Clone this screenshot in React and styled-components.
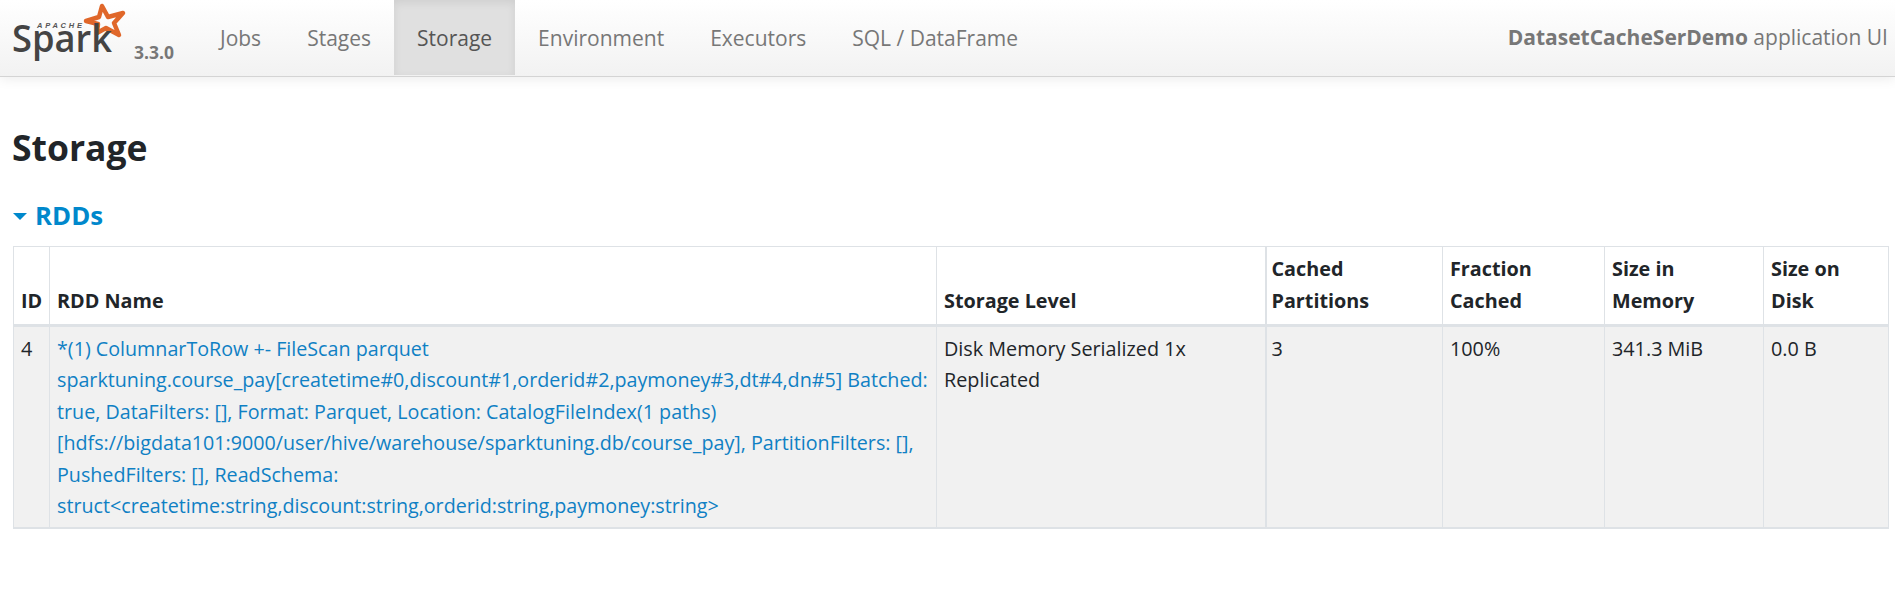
import React from "react";
import styled, { createGlobalStyle } from "styled-components";

const Global = createGlobalStyle`
  html, body { margin: 0; padding: 0; background: #fff; }
  body {
    font-family: "Open Sans", "Noto Sans", "Liberation Sans", sans-serif;
    font-size: 19.8px;
    line-height: 31.5px;
    color: #212529;
  }
`;

const Navbar = styled.nav`
  display: flex;
  align-items: stretch;
  box-sizing: border-box;
  height: 76.5px;
  border-bottom: 1.5px solid #d4d4d4;
  background: linear-gradient(to bottom, #ffffff, #f2f2f2);
  box-shadow: 0 2px 12px rgba(0, 0, 0, 0.08);
`;

const Brand = styled.a`
  display: flex;
  align-items: flex-start;
  width: 197px;
  padding-left: 10px;
  box-sizing: border-box;
`;

const Version = styled.span`
  align-self: flex-end;
  font-size: 17.5px;
  font-weight: 700;
  line-height: 1;
  color: #777;
  margin: 0 0 14px 4px;
`;

const NavItem = styled.a`
  display: flex;
  align-items: center;
  padding: 2px 23px 0;
  margin-bottom: 1px;
  font-size: 21px;
  color: ${(p) => (p.$active ? "#555" : "#777")};
  background: ${(p) => (p.$active ? "#e0e0e0" : "transparent")};
  box-shadow: ${(p) => (p.$active ? "inset 0 3px 8px rgba(0, 0, 0, 0.08)" : "none")};
`;

const AppName = styled.div`
  margin-left: auto;
  align-self: center;
  padding-right: 7px;
  color: #777;
  font-size: 21px;
  white-space: nowrap;

  strong { font-weight: 700; }
`;

const Content = styled.main`
  padding: 0 7px 0 13px;
`;

const Title = styled.h3`
  margin: 48px 0 0 -1px;
  font-size: 35.5px;
  line-height: 44px;
  font-weight: 700;
  color: #212529;
`;

const Section = styled.h4`
  display: flex;
  align-items: center;
  margin: 31px 0 16px;
  font-size: 25.8px;
  line-height: 30px;
  font-weight: 700;
  color: #0088cc;
`;

const Caret = styled.span`
  width: 0;
  height: 0;
  margin: 3px 8px 0 0;
  border-left: 7px solid transparent;
  border-right: 7px solid transparent;
  border-top: 7px solid #0088cc;
`;

const Table = styled.table`
  width: 100%;
  table-layout: fixed;
  border-collapse: collapse;
  border: 1px solid #dee2e6;
`;

const Head = styled.th`
  width: ${(p) => p.$w}px;
  padding: 6px 7px 7px ${(p) => (p.$thick ? 5 : 7)}px;
  box-sizing: border-box;
  text-align: left;
  vertical-align: bottom;
  font-size: 19.8px;
  line-height: 32px;
  font-weight: 700;
  border: 1px solid #dee2e6;
  border-left-width: ${(p) => (p.$thick ? 2 : 1)}px;
  border-bottom: 3px solid #dee2e6;
`;

const Cell = styled.td`
  padding: 6px 7px 5px ${(p) => (p.$thick ? 5 : 7)}px;
  vertical-align: top;
  background: #f1f1f1;
  border: 1px solid #dee2e6;
  border-left-width: ${(p) => (p.$thick ? 2 : 1)}px;
  border-bottom-width: 2px;
`;

const RddLink = styled.a`
  font-size: 19.7px;
  color: #0f80c4;
`;

function SparkLogo() {
  return (
    <svg width="120" height="62" viewBox="10 0 120 62" style={{ display: "block" }}>
      <path
        d="M102 6 L108 17 L123 13 L114 23 L119 35 L106 28 L97 33 L98 24 L86 21 L99 17 Z"
        fill="none"
        stroke="#e0672a"
        strokeWidth="4.5"
        strokeLinejoin="round"
      />
      <text x="37" y="28" fontFamily="Liberation Sans, sans-serif" fontSize="7.5" fontStyle="italic" fontWeight="700" textLength="45" fill="#555">APACHE</text>
      <text x="12" y="52" fontFamily="Open Sans, sans-serif" fontSize="37" fontWeight="600" textLength="100" lengthAdjust="spacingAndGlyphs" fill="#444">Spark</text>
    </svg>
  );
}

const tabs = ["Jobs", "Stages", "Storage", "Environment", "Executors", "SQL / DataFrame"];

export default function App() {
  return (
    <>
      <Global />
      <Navbar>
        <Brand>
          <SparkLogo />
          <Version>3.3.0</Version>
        </Brand>
        {tabs.map((t) => (
          <NavItem key={t} $active={t === "Storage"}>{t}</NavItem>
        ))}
        <AppName><strong>DatasetCacheSerDemo</strong> application UI</AppName>
      </Navbar>
      <Content>
        <Title>Storage</Title>
        <Section><Caret />RDDs</Section>
        <Table>
          <thead>
            <tr>
              <Head $w={36}>ID</Head>
              <Head $w={887}>RDD Name</Head>
              <Head $w={329}>Storage Level</Head>
              <Head $w={177} $thick>Cached Partitions</Head>
              <Head $w={162}>Fraction Cached</Head>
              <Head $w={159}>Size in Memory</Head>
              <Head $w={125}>Size on Disk</Head>
            </tr>
          </thead>
          <tbody>
            <tr>
              <Cell>4</Cell>
              <Cell>
                <RddLink>
                  *(1) ColumnarToRow +- FileScan parquet sparktuning.course_pay[createtime#0,discount#1,orderid#2,paymoney#3,dt#4,dn#5] Batched: true, DataFilters: [], Format: Parquet, Location: CatalogFileIndex(1 paths)[hdfs://bigdata101:9000/user/hive/warehouse/sparktuning.db/course_pay], PartitionFilters: [], PushedFilters: [], ReadSchema: struct&lt;createtime:string,discount:string,orderid:string,paymoney:string&gt;
                </RddLink>
              </Cell>
              <Cell>Disk Memory Serialized 1x Replicated</Cell>
              <Cell $thick>3</Cell>
              <Cell>100%</Cell>
              <Cell>341.3 MiB</Cell>
              <Cell>0.0 B</Cell>
            </tr>
          </tbody>
        </Table>
      </Content>
    </>
  );
}
